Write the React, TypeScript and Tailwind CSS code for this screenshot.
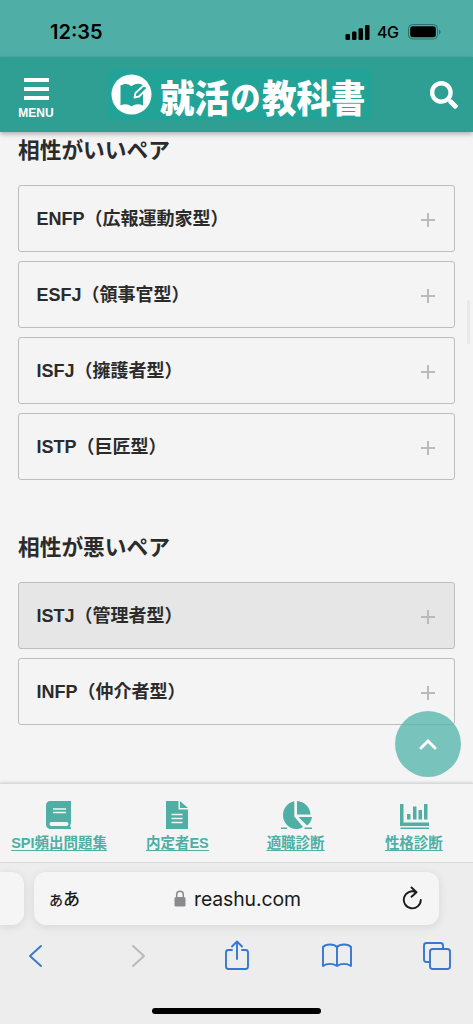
import { ReactNode } from "react";
import { FaSearch } from "react-icons/fa";

const goodPairs = [
  "ENFP（広報運動家型）",
  "ESFJ（領事官型）",
  "ISFJ（擁護者型）",
  "ISTP（巨匠型）",
];

const badPairs = ["ISTJ（管理者型）", "INFP（仲介者型）"];

function StatusBar() {
  return (
    <div className="flex h-[57px] shrink-0 items-start justify-between bg-[#4fafa6] pl-[50px] pr-[32px] pt-[20px] text-black">
      <span className="font-['Inter'] text-[20px] font-semibold leading-[24px]">
        12:35
      </span>
      <div className="flex h-[24px] items-center">
        <svg width="25" height="16" viewBox="0 0 25 16">
          <rect x="0.5" y="10" width="4.5" height="6" rx="1.3" />
          <rect x="7" y="7.5" width="4.5" height="8.5" rx="1.3" />
          <rect x="13.5" y="4.3" width="4.5" height="11.7" rx="1.3" />
          <rect x="20" y="1" width="4.5" height="15" rx="1.3" />
        </svg>
        <span className="ml-[7px] w-[24px] font-['Inter'] text-[16px] font-medium leading-[24px] tracking-tight">
          4G
        </span>
        <svg className="ml-[7px]" width="33" height="16" viewBox="0 0 33 16">
          <rect
            x="0.5"
            y="0.5"
            width="29"
            height="14.5"
            rx="4"
            fill="none"
            stroke="#2d716a"
          />
          <rect x="2.2" y="2.2" width="25.6" height="11.1" rx="2.5" />
          <path d="M31 5.5c2 .8 2 4 0 4.8z" fill="#2d716a" />
        </svg>
      </div>
    </div>
  );
}

function Logo() {
  return (
    <div className="flex h-[51px] w-[263px] items-center bg-[#22a397] pl-[3px] text-white">
      <svg className="shrink-0" width="41" height="41" viewBox="0 0 41 41">
        <circle cx="20.5" cy="20.5" r="20" fill="white" />
        <path
          d="M9.5 11.5c4-2.500 8-2 11 .8 2.500-2.500 7-3.300 11.500-1.300v20.500c-4-1.800-8-1.500-11.500 1.100-3.500-2.600-7-2.900-11-1.100z"
          fill="#22a397"
        />
        <path
          d="M23.5 23.500l1-4.500 8.800-8.200 3.200 3.400-8.500 8.300z"
          fill="#22a397"
          stroke="white"
          strokeWidth="1.8"
          strokeLinejoin="round"
        />
      </svg>
      <div className="ml-[8px] flex scale-y-110 items-center whitespace-nowrap font-['Noto_Sans_CJK_JP',sans-serif] text-[34.5px] font-black leading-[51px]">
        <span>就</span>
        <span>活</span>
        <span className="w-[33px] pt-[3px] text-center text-[30px]">の</span>
        <span>教</span>
        <span>科</span>
        <span>書</span>
      </div>
    </div>
  );
}

function Header() {
  return (
    <header className="z-10 flex h-[75px] shrink-0 items-center bg-[#309f93] pl-[18px] pr-[15px] text-white shadow-[0_2px_5px_rgba(0,0,0,0.3)]">
      <div className="flex w-[36px] flex-col items-center pt-[9px]">
        <div className="flex flex-col gap-[5px]">
          <div className="h-[4px] w-[25px] bg-white" />
          <div className="h-[4px] w-[25px] bg-white" />
          <div className="h-[4px] w-[25px] bg-white" />
        </div>
        <span className="mt-[5px] text-[12px] font-bold leading-[16px]">
          MENU
        </span>
      </div>
      <div className="ml-[54px]">
        <Logo />
      </div>
      <FaSearch className="ml-auto h-[28px] w-[28px]" />
    </header>
  );
}

function PairCard({ label, active }: { label: string; active?: boolean }) {
  return (
    <div
      className={`flex h-[67px] items-center justify-between rounded-[3px] border border-[#bdbdbd] pl-[17.5px] pr-[19px] ${
        active ? "bg-[#e6e6e6]" : "bg-[#f4f4f4]"
      }`}
    >
      <span className="pt-[2px] text-[18px] font-bold leading-[27px]">
        {label}
      </span>
      <svg width="14" height="14" viewBox="0 0 14 14" className="mt-[2px]">
        <path d="M7 0v14M0 7h14" stroke="#bababa" strokeWidth="2" />
      </svg>
    </div>
  );
}

function PairSection({
  title,
  pairs,
  activeIndex,
}: {
  title: string;
  pairs: string[];
  activeIndex?: number;
}) {
  return (
    <section>
      <h2 className="text-[21.7px] font-bold leading-[32px]">{title}</h2>
      <div className="mt-[18px] flex flex-col gap-[9px]">
        {pairs.map((pair, index) => (
          <PairCard key={pair} label={pair} active={index === activeIndex} />
        ))}
      </div>
    </section>
  );
}

function NavItem({ label, children }: { label: string; children: ReactNode }) {
  return (
    <a className="flex flex-1 flex-col items-center pt-[16px] text-[#4fafa5]">
      <svg width="32" height="30" viewBox="0 0 32 30" fill="currentColor">
        {children}
      </svg>
      <span className="mt-[2px] whitespace-nowrap text-[14.5px] font-bold leading-[22px] underline decoration-1 underline-offset-[2px]">
        {label}
      </span>
    </a>
  );
}

function BottomNav() {
  return (
    <nav className="z-10 flex h-[79px] shrink-0 border-t border-[#d5dadd] bg-[#f4f4f4] shadow-[0_-1px_2px_rgba(100,120,140,0.2)]">
      <NavItem label="SPI頻出問題集">
        <path d="M7 1h21v22.5l-.7 1.500v2l.7 1v1H8c-3 0-5-2-5-5V5c0-2 2-4 4-4z" />
        <path d="M10 9H23M10 12.5H23" stroke="#f4f4f4" strokeWidth="1.6" />
        <rect x="6.5" y="22" width="19" height="4" rx="2" fill="#f4f4f4" />
      </NavItem>
      <NavItem label="内定者ES">
        <path d="M5 1h12.500v8.500H27V29H5zM19 1l8 7h-8z" />
        <path
          d="M10.5 14.5h11M10.5 18.500h11M10.5 22.500h11"
          stroke="#f4f4f4"
          strokeWidth="1.7"
        />
      </NavItem>
      <NavItem label="適職診断">
        <path d="M14.300 1.300V16.500l8.700 10.500c-2 1.400-4 2-7 2A14 14 0 0 1 14.300 1.300z" />
        <path d="M17 1c7.500.5 13 6 13.5 13.500H17zM18.500 17H32c-.5 4-2.200 6.500-5 8.500z" />
        <path d="M1 27.500h6V29H1zM24.500 27.500H32V29h-7.500z" />
      </NavItem>
      <NavItem label="性格診断">
        <path d="M2 4h3.500v18.500H31V26H2zM2.500 27.500H31V29H2.500z" />
        <path d="M9 14h3.500v5.500H9zM15 6.500h3.500v13H15zM20.5 10H24v9.500h-3.500zM26 4h3.500v15.500H26z" />
      </NavItem>
    </nav>
  );
}

function AddressBar() {
  return (
    <div className="flex gap-[10px] pt-[9px]">
      <div className="h-[53px] w-[24px] rounded-r-[12px] bg-[#f5f5f5] shadow-[0_2px_9px_rgba(60,70,70,0.13)]" />
      <div className="flex h-[53px] w-[405px] items-center rounded-[12px] bg-[#f5f5f5] pl-[15px] pr-[16px] text-[#1a1a1a] shadow-[0_2px_9px_rgba(60,70,70,0.13)]">
        <div className="w-[125px] font-['Noto_Sans_CJK_JP',sans-serif] font-medium leading-[28px]">
          <span className="text-[14px]">あ</span>
          <span className="text-[17px]">あ</span>
        </div>
        <svg width="12" height="17" viewBox="0 0 12 17">
          <path
            d="M2.7 8V4.500a3.300 3.300 0 0 1 6.600 0V8"
            fill="none"
            stroke="#8a8a8e"
            strokeWidth="1.5"
          />
          <rect x="0.5" y="7" width="11" height="9.5" rx="1.5" fill="#8a8a8e" />
        </svg>
        <span className="ml-[8px] font-['Inter'] text-[19.4px] leading-[26px] tracking-[-0.1px]">
          reashu.com
        </span>
        <svg
          className="ml-auto"
          width="21"
          height="25"
          viewBox="0 0 21 25"
          fill="none"
          stroke="currentColor"
          strokeWidth="1.9"
          strokeLinecap="round"
          strokeLinejoin="round"
        >
          <path d="M14 6.200A8.500 8.500 0 1 0 18.800 14M9.500 1.500l5 4.700-5 4.500" />
        </svg>
      </div>
    </div>
  );
}

function Toolbar() {
  return (
    <div className="mt-[15px] flex h-[32px] items-center text-[#3478d2] [&_svg]:fill-none [&_svg]:stroke-current [&_svg]:stroke-[1.9] [&_svg]:[stroke-linecap:round] [&_svg]:[stroke-linejoin:round]">
      <svg className="ml-[28px]" width="15" height="24" viewBox="0 0 15 24">
        <path d="M13 2L2 12l11 10" />
      </svg>
      <svg
        className="ml-[88px] text-[#b9b9bb]"
        width="15"
        height="24"
        viewBox="0 0 15 24"
      >
        <path d="M2 2l11 10L2 22" />
      </svg>
      <svg className="ml-[77px]" width="28" height="32" viewBox="0 0 28 32">
        <path d="M9 10H5.500Q3 10 3 12.500v14Q3 29 5.500 29h17q2.500 0 2.500-2.500v-14Q25 10 22.500 10H19M14 19V1.500M9 6.500l5-5 5 5" />
      </svg>
      <svg className="ml-[70px]" width="32" height="28" viewBox="0 0 32 28">
        <path d="M16 5C12.500 1.500 5 1.800 2 5v19c4-2.800 10-2.800 14 0 4-2.800 10-2.800 14 0V5c-3-3.200-10.500-3.500-14 0zM16 5v19" />
      </svg>
      <svg className="ml-[69px]" width="30" height="30" viewBox="0 0 30 30">
        <path d="M8 21H4.500Q2 21 2 18.500v-14Q2 2 4.500 2h14Q21 2 21 4.500V8" />
        <rect x="8" y="8" width="20" height="20" rx="2.8" />
      </svg>
    </div>
  );
}

export default function App() {
  return (
    <div className="relative flex h-[1024px] w-[473px] flex-col overflow-hidden bg-[#f4f4f4] font-['Liberation_Sans','Noto_Sans_CJK_JP',sans-serif] text-[#2b2b2b]">
      <StatusBar />
      <Header />
      <main className="flex h-[651px] shrink-0 flex-col gap-[52px] px-[18px] pt-[3px]">
        <PairSection title="相性がいいペア" pairs={goodPairs} />
        <PairSection title="相性が悪いペア" pairs={badPairs} activeIndex={0} />
      </main>
      <BottomNav />
      <footer className="flex h-[162px] shrink-0 flex-col border-t border-[#d9dcdc] bg-[#ededed]">
        <AddressBar />
        <Toolbar />
        <div className="mx-auto mt-[36px] h-[6px] w-[169px] rounded-full bg-black" />
      </footer>

      {/* scroll indicator */}
      <div className="absolute right-[3px] top-[300px] h-[44px] w-[3px] rounded-full bg-[#e9e9e9]" />

      {/* back to top */}
      <button
        aria-label="Back to top"
        className="absolute left-[395px] top-[711px] z-20 flex h-[66px] w-[66px] items-center justify-center rounded-full bg-[#4fb3a9]/75"
      >
        <svg width="18" height="12" viewBox="0 0 18 12">
          <path
            d="M2 10l7-7 7 7"
            fill="none"
            stroke="white"
            strokeWidth="3"
            strokeLinecap="round"
          />
        </svg>
      </button>
    </div>
  );
}
